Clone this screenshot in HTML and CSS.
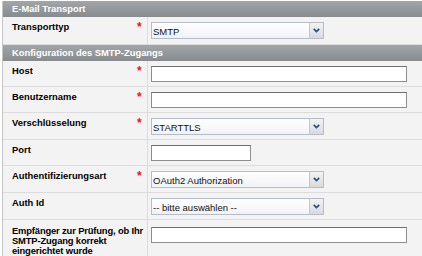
FILE: index.html
```html
<!DOCTYPE html>
<html>
<head>
<meta charset="utf-8">
<link rel="stylesheet" href="styles.css">
</head>
<body>
<div class="form">
  <div class="hd">E-Mail Transport</div>
  <div class="row tall">
    <div class="lbl">Transporttyp</div><div class="req">*</div>
    <div class="fld"><div class="sel"><span class="val">SMTP</span><span class="btn"><svg width="7" height="5" viewBox="0 0 7 5"><path d="M0.8 0.9 L3.5 3.6 L6.2 0.9" fill="none" stroke="#274b8f" stroke-width="1.7"/></svg></span></div></div>
  </div>
  <div class="hd">Konfiguration des SMTP-Zugangs</div>
  <div class="row">
    <div class="lbl">Host</div><div class="req">*</div>
    <div class="fld"><div class="inp"></div></div>
  </div>
  <div class="row">
    <div class="lbl">Benutzername</div><div class="req">*</div>
    <div class="fld"><div class="inp"></div></div>
  </div>
  <div class="row">
    <div class="lbl">Verschlüsselung</div><div class="req">*</div>
    <div class="fld"><div class="sel"><span class="val">STARTTLS</span><span class="btn"><svg width="7" height="5" viewBox="0 0 7 5"><path d="M0.8 0.9 L3.5 3.6 L6.2 0.9" fill="none" stroke="#274b8f" stroke-width="1.7"/></svg></span></div></div>
  </div>
  <div class="row">
    <div class="lbl">Port</div><div class="req"></div>
    <div class="fld"><div class="inp port"></div></div>
  </div>
  <div class="row">
    <div class="lbl">Authentifizierungsart</div><div class="req">*</div>
    <div class="fld"><div class="sel"><span class="val">OAuth2 Authorization</span><span class="btn"><svg width="7" height="5" viewBox="0 0 7 5"><path d="M0.8 0.9 L3.5 3.6 L6.2 0.9" fill="none" stroke="#274b8f" stroke-width="1.7"/></svg></span></div></div>
  </div>
  <div class="row">
    <div class="lbl">Auth Id</div><div class="req"></div>
    <div class="fld"><div class="sel"><span class="val">-- bitte auswählen --</span><span class="btn"><svg width="7" height="5" viewBox="0 0 7 5"><path d="M0.8 0.9 L3.5 3.6 L6.2 0.9" fill="none" stroke="#274b8f" stroke-width="1.7"/></svg></span></div></div>
  </div>
  <div class="row last">
    <div class="lbl wide">Empfänger zur Prüfung, ob Ihr<br>SMTP-Zugang korrekt<br>eingerichtet wurde</div>
    <div class="fld"><div class="inp"></div></div>
  </div>
</div>
</body>
</html>
```

FILE: styles.css
```css
html, body {
  margin: 0;
  padding: 0;
  background: #ffffff;
}
body {
  font-family: "Liberation Sans", Arial, sans-serif;
  color: #000;
}
.form {
  margin: 1px 0 0 2px;
  border-left: 1px solid #c4c4c4;
  background: #f3f3f3;
}
.hd {
  height: 16px;
  line-height: 16px;
  padding-left: 9px;
  font-size: 9.4px;
  font-weight: bold;
  color: #fff;
  background: linear-gradient(#a3a6a8, #878b8e);
}
.row {
  display: grid;
  grid-template-columns: 130px 14px 1fr;
  min-height: 25px;
  border-bottom: 1px solid #dcdcdc;
}
.row.tall {
  min-height: 27px;
}
.lbl {
  padding: 5px 0 0 9px;
  font-size: 9.4px;
  line-height: 10px;
  font-weight: bold;
}
.lbl.wide {
  grid-column: 1 / 3;
  padding-top: 6px;
  line-height: 10px;
  white-space: nowrap;
  letter-spacing: -0.15px;
}
.req {
  padding: 5px 0 0 4px;
  color: #e8141b;
  font-size: 12px;
  line-height: 10px;
  font-weight: bold;
}
.fld {
  border-left: 1px solid #dcdcdc;
  padding: 5px 0 4px 3px;
}
.inp {
  box-sizing: border-box;
  width: 256px;
  height: 16px;
  background: #fff;
  border: 1px solid #8e8e8e;
  border-top-color: #6f6f6f;
}
.inp.port {
  width: 100px;
}
.row.last .fld {
  padding-top: 7px;
}
.sel {
  box-sizing: border-box;
  width: 173px;
  height: 17px;
  display: flex;
  align-items: stretch;
  border: 1px solid #b7bccb;
  background: linear-gradient(#ffffff, #f1f2f6);
}
.val {
  flex: 1;
  display: flex;
  align-items: center;
  padding: 1px 0 0 1px;
  font-size: 9.5px;
  color: #111;
  white-space: nowrap;
  overflow: hidden;
}
.btn {
  width: 13px;
  border-left: 1px solid #c3c7d3;
  background: linear-gradient(#f3f3f3, #d9dadd);
  display: flex;
  align-items: center;
  justify-content: center;
}
.btn svg {
  display: block;
}
```
